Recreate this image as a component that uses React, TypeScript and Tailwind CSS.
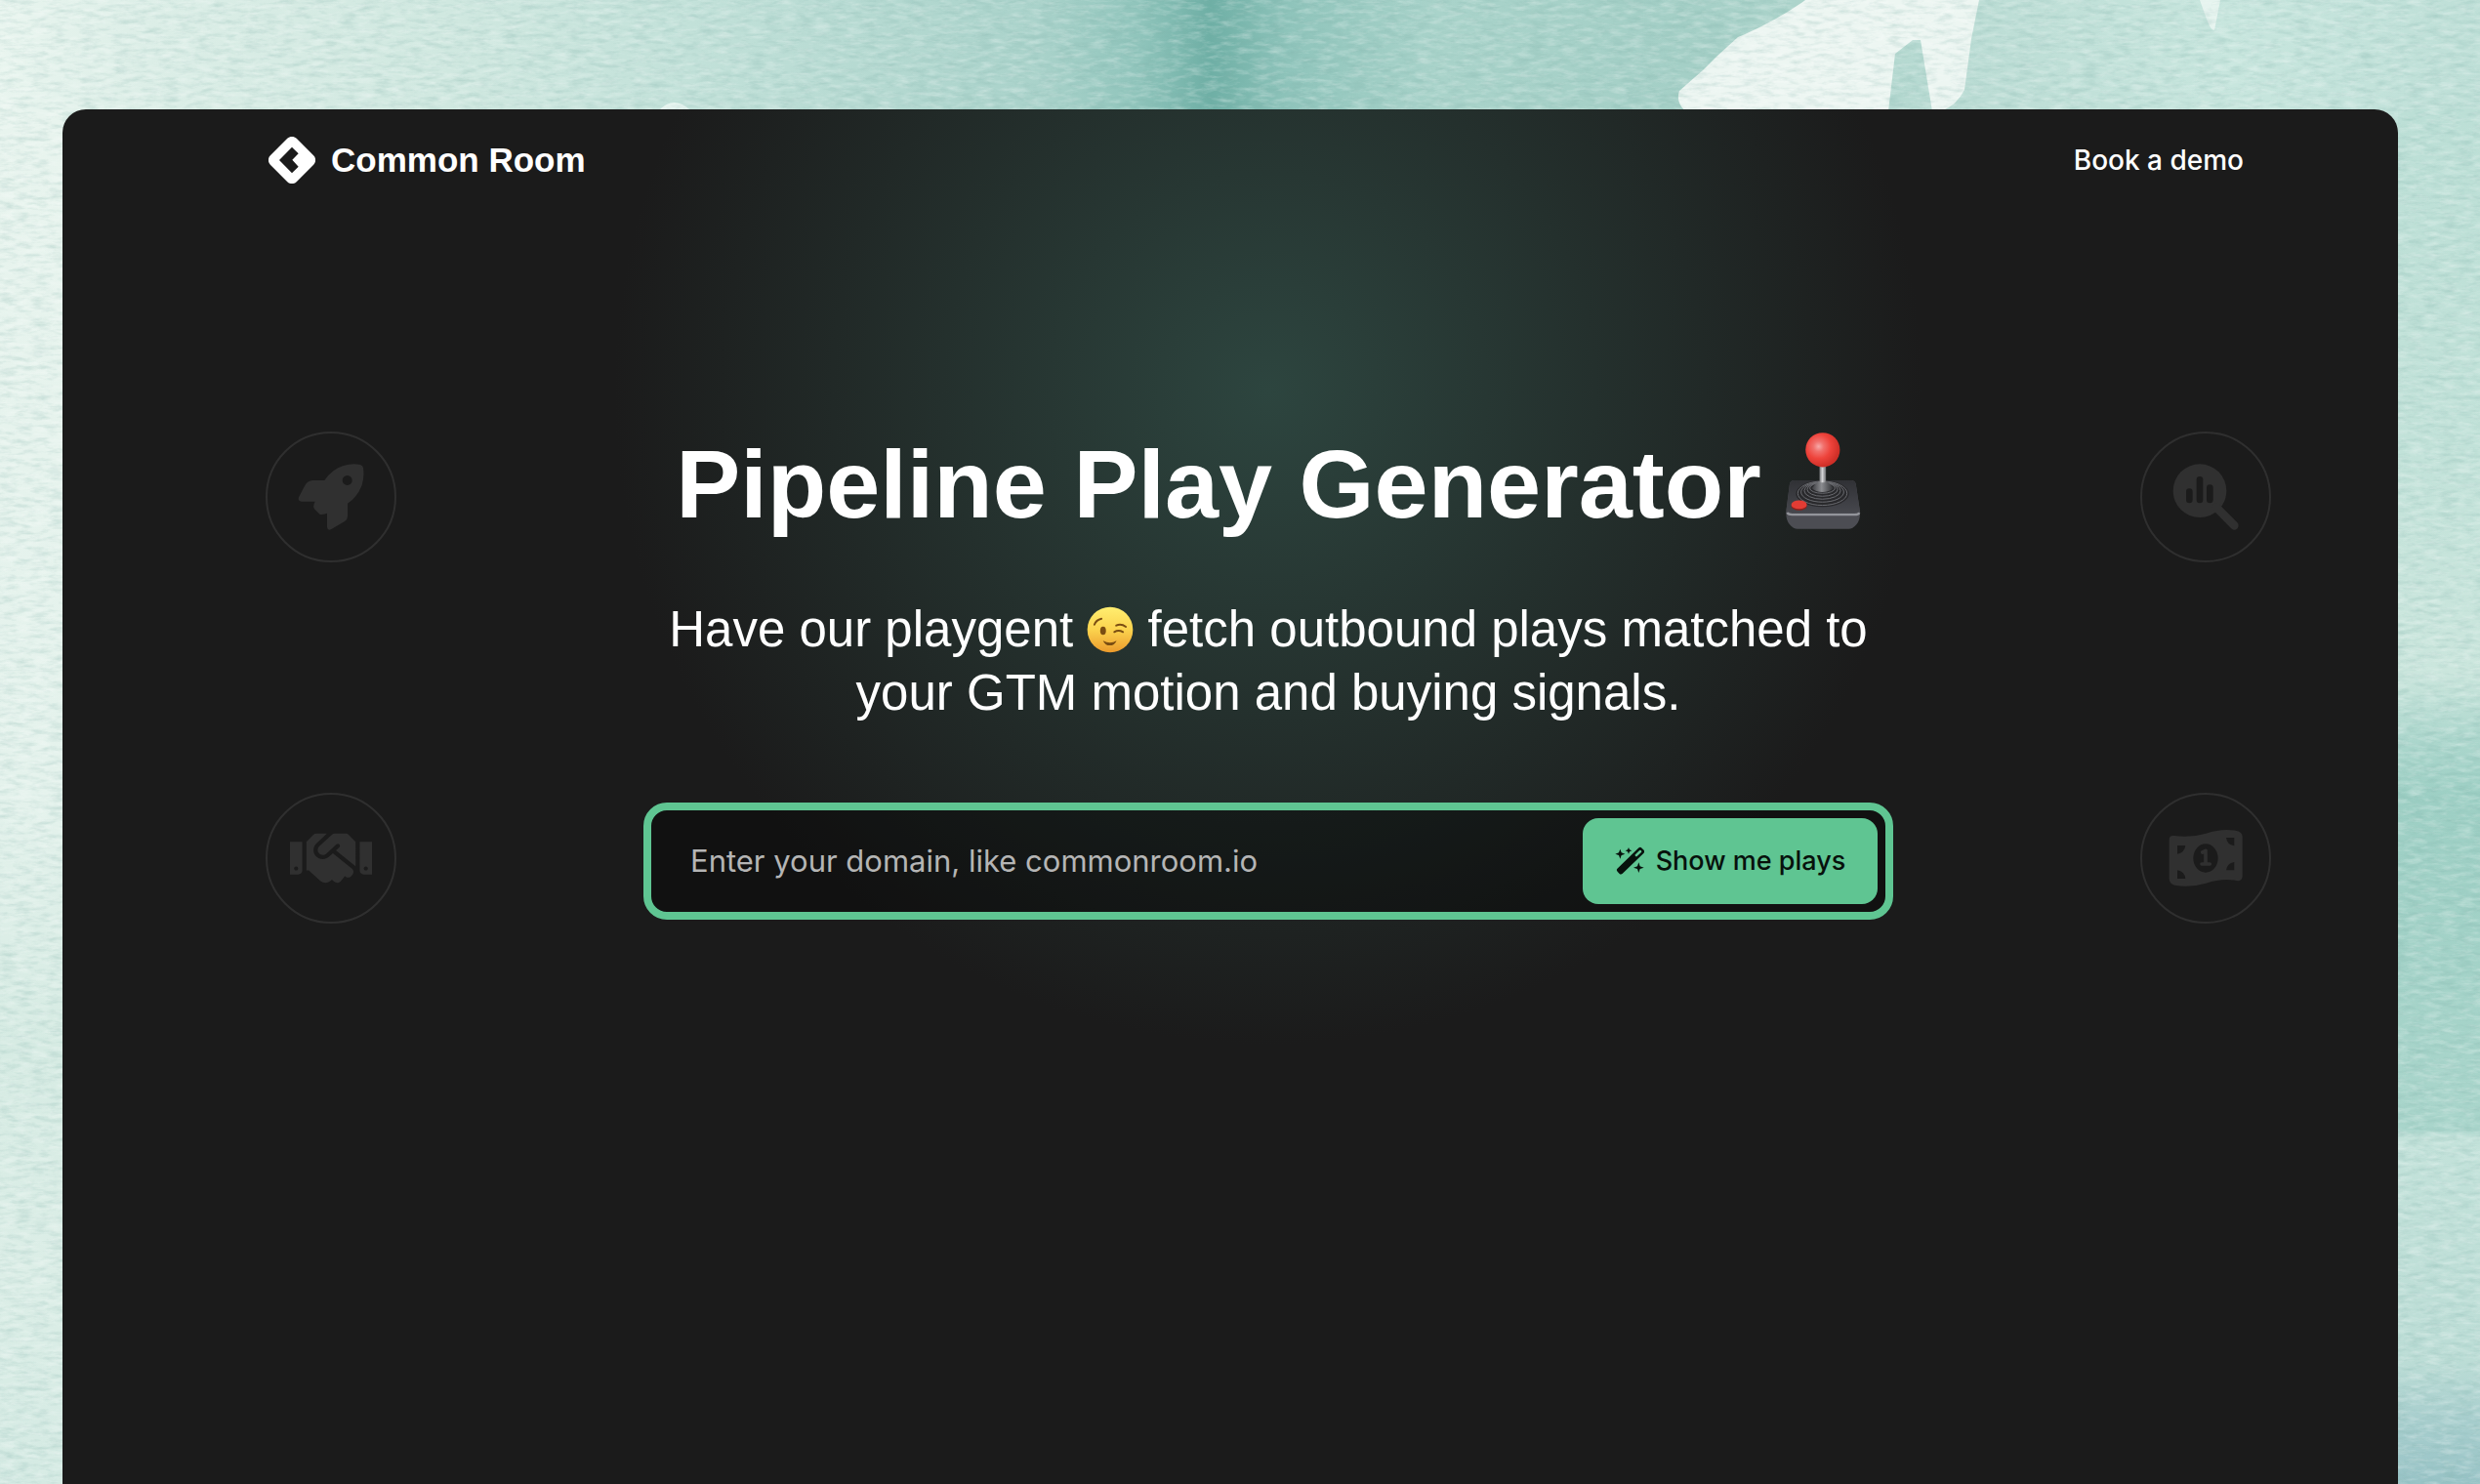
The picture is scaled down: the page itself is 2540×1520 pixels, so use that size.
import type { ReactNode } from "react";
import { FaHandshake } from "react-icons/fa";

function Watercolor() {
  return (
    <svg
      aria-hidden="true"
      className="absolute inset-0 h-full w-full"
      viewBox="0 0 2540 1520"
      preserveAspectRatio="none"
    >
      <defs>
        <linearGradient id="wash" x1="0" x2="1" y1="0" y2="0">
          <stop offset="0" stopColor="#e9f5ef" />
          <stop offset="0.06" stopColor="#dceee7" />
          <stop offset="0.18" stopColor="#d0e8e0" />
          <stop offset="0.28" stopColor="#c2e1d9" />
          <stop offset="0.42" stopColor="#a9d2ca" />
          <stop offset="0.46" stopColor="#8fc4bb" />
          <stop offset="0.488" stopColor="#6eafa5" />
          <stop offset="0.52" stopColor="#8fc4bb" />
          <stop offset="0.58" stopColor="#a9d3ca" />
          <stop offset="0.68" stopColor="#a4cfc6" />
          <stop offset="0.8" stopColor="#bcddd5" />
          <stop offset="0.9" stopColor="#c8e6de" />
          <stop offset="1" stopColor="#bedfd7" />
        </linearGradient>
        <linearGradient id="left" x1="0" x2="0" y1="0" y2="1">
          <stop offset="0" stopColor="#e8f4ee" />
          <stop offset="0.5" stopColor="#e4f2ec" />
          <stop offset="0.68" stopColor="#d6ebe3" />
          <stop offset="0.85" stopColor="#dceee7" />
          <stop offset="1" stopColor="#d4eae3" />
        </linearGradient>
        <linearGradient id="right" x1="0" x2="0" y1="0" y2="1">
          <stop offset="0" stopColor="#bcdfd6" />
          <stop offset="0.25" stopColor="#c2e2d9" />
          <stop offset="0.41" stopColor="#cbe6dd" />
          <stop offset="0.46" stopColor="#abd6cc" />
          <stop offset="0.5" stopColor="#9dcfc4" />
          <stop offset="0.73" stopColor="#a9d5cb" />
          <stop offset="0.742" stopColor="#a9d5cb" />
          <stop offset="0.748" stopColor="#c3e2da" />
          <stop offset="0.91" stopColor="#bcddd6" />
          <stop offset="0.95" stopColor="#a9cfce" />
          <stop offset="1" stopColor="#98c3c6" />
        </linearGradient>
        <filter id="fibre" x="0" y="0" width="100%" height="100%">
          <feTurbulence type="fractalNoise" baseFrequency="0.06 0.2" numOctaves="4" seed="8" />
          <feColorMatrix values="0 0 0 0 0.2  0 0 0 0 0.42  0 0 0 0 0.38  1.4 0 0 0 -0.6" />
        </filter>
        <filter id="fibreLight" x="0" y="0" width="100%" height="100%">
          <feTurbulence type="fractalNoise" baseFrequency="0.06 0.2" numOctaves="4" seed="21" />
          <feColorMatrix values="0 0 0 0 1  0 0 0 0 1  0 0 0 0 1  1.6 0 0 0 -0.7" />
        </filter>
      </defs>
      <rect width="2540" height="1520" fill="url(#wash)" />
      <rect y="112" width="64" height="1408" fill="url(#left)" />
      <rect x="2456" y="112" width="84" height="1408" fill="url(#right)" />
      <path
        d="M1849 0 C1830 14 1800 30 1780 38 L1758 58 L1744 72 L1720 93 Q1716 104 1726 114 H1934 L1941 55 L1959 41 L1967 41 L1979 114 H1988 Q2004 108 2012 92 L2019 40 L2027 0Z"
        fill="#edf6f2"
      />
      <path d="M2253 0 L2258 14 Q2264 32 2268 31 L2274 0Z" fill="#e6f4ef" />
      <path d="M676 112 Q690 98 706 112Z" fill="#e6f4ef" />
      <rect width="2540" height="1520" filter="url(#fibre)" opacity="0.4" />
      <rect width="2540" height="1520" filter="url(#fibreLight)" opacity="0.4" />
    </svg>
  );
}

function LogoMark() {
  return (
    <svg aria-hidden="true" className="size-12" viewBox="45 61 144 144">
      <rect x="60" y="76" width="114" height="114" rx="20" fill="#fff" transform="rotate(45 117 133)" />
      <path d="M117 93 L137 113 L118 132 L137 153 L117 173 L78 133Z" fill="#1b1b1b" />
    </svg>
  );
}

function Joystick() {
  return (
    <svg
      role="img"
      aria-label="joystick"
      className="h-[101px] w-[78px] shrink-0"
      viewBox="675 66 235 303"
    >
      <defs>
        <radialGradient id="ball" cx="0.38" cy="0.4" r="0.6">
          <stop offset="0" stopColor="#f7a9a8" />
          <stop offset="0.25" stopColor="#f1706c" />
          <stop offset="0.6" stopColor="#ee433b" />
          <stop offset="1" stopColor="#cf2f27" />
        </radialGradient>
        <linearGradient id="stick" x1="0" x2="1" y1="0" y2="0">
          <stop offset="0" stopColor="#77787b" />
          <stop offset="0.45" stopColor="#d4d4d6" />
          <stop offset="1" stopColor="#6c6d70" />
        </linearGradient>
        <linearGradient id="cone" x1="0" x2="1" y1="0" y2="0">
          <stop offset="0" stopColor="#3a3b3f" />
          <stop offset="0.45" stopColor="#8b8c90" />
          <stop offset="1" stopColor="#2c2d30" />
        </linearGradient>
        <linearGradient id="deck" x1="0" x2="0" y1="0" y2="1">
          <stop offset="0" stopColor="#303135" />
          <stop offset="1" stopColor="#46474d" />
        </linearGradient>
      </defs>
      <path d="M704 216 H880 Q891 216 894 227 L907 312 Q908 340 896 352 Q884 366 872 366 H714 Q702 366 690 352 Q678 340 679 312 L690 227 Q693 216 704 216Z" fill="#4c4d53" />
      <path d="M704 216 H880 Q891 216 894 227 L906 306 Q906 316 896 316 H690 Q680 316 680 306 L690 227 Q693 216 704 216Z" fill="url(#deck)" />
      <path d="M682 316 Q686 322 698 322 H890 Q902 322 905 316" fill="none" stroke="#93959b" strokeWidth="7" />
      <ellipse cx="791" cy="257" rx="82" ry="41" fill="#29292c" />
      <g fill="none" stroke="#6a6b70" strokeWidth="3">
        <ellipse cx="791" cy="256" rx="76" ry="37" />
        <ellipse cx="791" cy="252" rx="66" ry="31" />
        <ellipse cx="791" cy="248" rx="56" ry="26" />
        <ellipse cx="791" cy="244" rx="47" ry="21" />
        <ellipse cx="791" cy="240" rx="39" ry="16" />
      </g>
      <path d="M778 219 H805 L826 240 Q812 252 791 252 Q770 252 758 240Z" fill="url(#cone)" />
      <rect x="782" y="170" width="20" height="53" rx="4" fill="url(#stick)" />
      <circle cx="792" cy="122" r="53" fill="url(#ball)" />
      <ellipse cx="719" cy="296" rx="24" ry="13" fill="#8e211d" />
      <ellipse cx="719" cy="291" rx="24" ry="13" fill="#e23c34" />
    </svg>
  );
}

function Wink() {
  return (
    <svg
      role="img"
      aria-label="winking face"
      className="inline-block size-12 -translate-y-1 align-middle"
      viewBox="52 56 144 146"
    >
      <defs>
        <linearGradient id="face" x1="0" x2="0" y1="0" y2="1">
          <stop offset="0" stopColor="#ffee70" />
          <stop offset="0.5" stopColor="#fbd34e" />
          <stop offset="1" stopColor="#eb9a2c" />
        </linearGradient>
      </defs>
      <circle cx="124" cy="129" r="71" fill="url(#face)" />
      <g fill="none" stroke="#7a4d12" strokeWidth="6" strokeLinecap="round">
        <path d="M75 113 Q80 99 97 95" />
        <path d="M143 116 Q158 109 173 120" />
        <path d="M137 136 Q150 128 164 136" />
      </g>
      <ellipse cx="102" cy="132" rx="9" ry="13" fill="#7a4d12" />
      <path d="M102 163 Q124 175 144 163 Q138 178 123 178 Q108 178 102 163Z" fill="#7a4d12" />
    </svg>
  );
}

function Wand() {
  return (
    <svg aria-hidden="true" className="size-[30px]" viewBox="188 170 90 90">
      <g transform="rotate(-44 236 214)">
        <rect x="184" y="203" width="104" height="22" rx="7" fill="#07110c" />
        <rect x="257" y="210" width="24" height="8" rx="3" fill="#5fc592" />
      </g>
      <path d="M204 178 L208 189 L219 193 L208 197 L204 208 L200 197 L189 193 L200 189Z" fill="#07110c" />
      <path d="M230 173 L233 180 L240 183 L233 186 L230 193 L227 186 L220 183 L227 180Z" fill="#07110c" />
      <path d="M261 219 L265 231 L277 235 L265 239 L261 251 L257 239 L245 235 L257 231Z" fill="#07110c" />
    </svg>
  );
}

function Rocket() {
  return (
    <svg aria-hidden="true" className="size-full" viewBox="72 71 390 390">
      <path
        fill="currentColor"
        fillRule="evenodd"
        d="M247 215 Q271 180 305 170 Q332 162 357 167 Q365 169 366 177 Q370 205 362 230 Q349 266 318 286 V325 Q318 335 309 341 L267 366 Q256 370 255 359 V316 Q240 322 232 319 L216 303 Q210 295 218 280 H176 Q164 278 168 267 L186 232 Q195 216 211 215Z M317 200 a15 15 0 1 0 0.1 0Z"
      />
    </svg>
  );
}

function SearchChart() {
  return (
    <svg aria-hidden="true" className="size-full" viewBox="72 71 390 390">
      <circle cx="249" cy="247" r="82" fill="currentColor" />
      <path d="M300 298 L355 354" stroke="currentColor" strokeWidth="26" strokeLinecap="round" />
      <g stroke="#1b1b1b" strokeWidth="20" strokeLinecap="round">
        <path d="M217 250 V275" />
        <path d="M249 213 V275" />
        <path d="M280 238 V275" />
      </g>
    </svg>
  );
}

function Banknote() {
  return (
    <svg aria-hidden="true" className="size-full" viewBox="72 71 390 390">
      <path
        fill="currentColor"
        d="M170 197 Q220 204 268 190 Q318 174 362 182 Q380 186 380 200 V321 Q380 338 362 335 Q318 327 268 343 Q220 357 172 349 Q155 345 155 329 V209 Q155 195 170 197Z"
      />
      <g fill="#1b1b1b">
        <path d="M180 227 H205 Q202 250 180 253Z" />
        <path d="M180 303 Q202 306 205 329 H180Z" />
        <path d="M355 203 H330 Q333 225 355 228Z" />
        <path d="M355 278 Q333 281 330 303 H355Z" />
        <ellipse cx="267" cy="266" rx="38" ry="44" />
      </g>
      <path
        d="M257 248 L267 243 V284 M255 284 H280"
        fill="none"
        stroke="currentColor"
        strokeWidth="11"
        strokeLinecap="round"
        strokeLinejoin="round"
      />
    </svg>
  );
}

function Badge({ children }: { children: ReactNode }) {
  return (
    <div className="flex size-[134px] items-center justify-center rounded-full border-2 border-[#2f2f2f] text-[#303030]">
      {children}
    </div>
  );
}

export default function App() {
  return (
    <div className="relative h-screen overflow-hidden pt-28 pr-[84px] pl-16 font-['Inter',sans-serif] text-white">
      <Watercolor />
      <div className="relative h-full min-h-[1430px] rounded-3xl bg-[#1b1b1b] bg-[radial-gradient(circle_670px_at_calc(50%_+_39px)_288px,#2d453f_0%,#1b1b1b_100%)] pr-[130px] pl-[208px]">
        <header className="flex items-center justify-between pt-7 pr-7 pl-[3px]">
          <a
            href="#home"
            className="flex items-center gap-4 font-['Liberation_Sans',sans-serif] text-[35px] leading-12 font-bold"
          >
            <LogoMark />
            Common Room
          </a>
          <a href="#demo" className="text-[28px] leading-10 font-medium">
            Book a demo
          </a>
        </header>
        <main className="flex justify-between pt-[254px]">
          <div className="flex flex-col gap-[236px]">
            <Badge>
              <Rocket />
            </Badge>
            <Badge>
              <FaHandshake aria-hidden="true" size={84} />
            </Badge>
          </div>
          <div className="flex max-w-[1280px] flex-1 flex-col items-center">
            <h1 className="flex items-start gap-6 font-['Liberation_Sans',sans-serif] text-[99px] leading-[108px] font-bold whitespace-nowrap">
              Pipeline Play Generator
              <Joystick />
            </h1>
            <p className="mt-[62px] text-center font-['Liberation_Sans',sans-serif] text-[51px] leading-[65px]">
              Have our playgent <Wink /> fetch outbound plays matched to
              <br />
              your GTM motion and buying signals.
            </p>
            <form
              className="mt-20 flex w-full rounded-3xl border-8 border-[#5fc592] bg-black/35 p-2"
              onSubmit={(e) => e.preventDefault()}
            >
              <input
                type="text"
                aria-label="Your domain"
                placeholder="Enter your domain, like commonroom.io"
                className="min-w-0 flex-1 bg-transparent pl-8 text-[31px] outline-none placeholder:text-[#b5b5b5]"
              />
              <button
                type="submit"
                className="flex h-[88px] w-[302px] items-center justify-center gap-3 rounded-2xl bg-[#5fc592] text-[27px] font-medium text-[#07110c]"
              >
                <Wand />
                Show me plays
              </button>
            </form>
          </div>
          <div className="flex flex-col gap-[236px]">
            <Badge>
              <SearchChart />
            </Badge>
            <Badge>
              <Banknote />
            </Badge>
          </div>
        </main>
      </div>
    </div>
  );
}
